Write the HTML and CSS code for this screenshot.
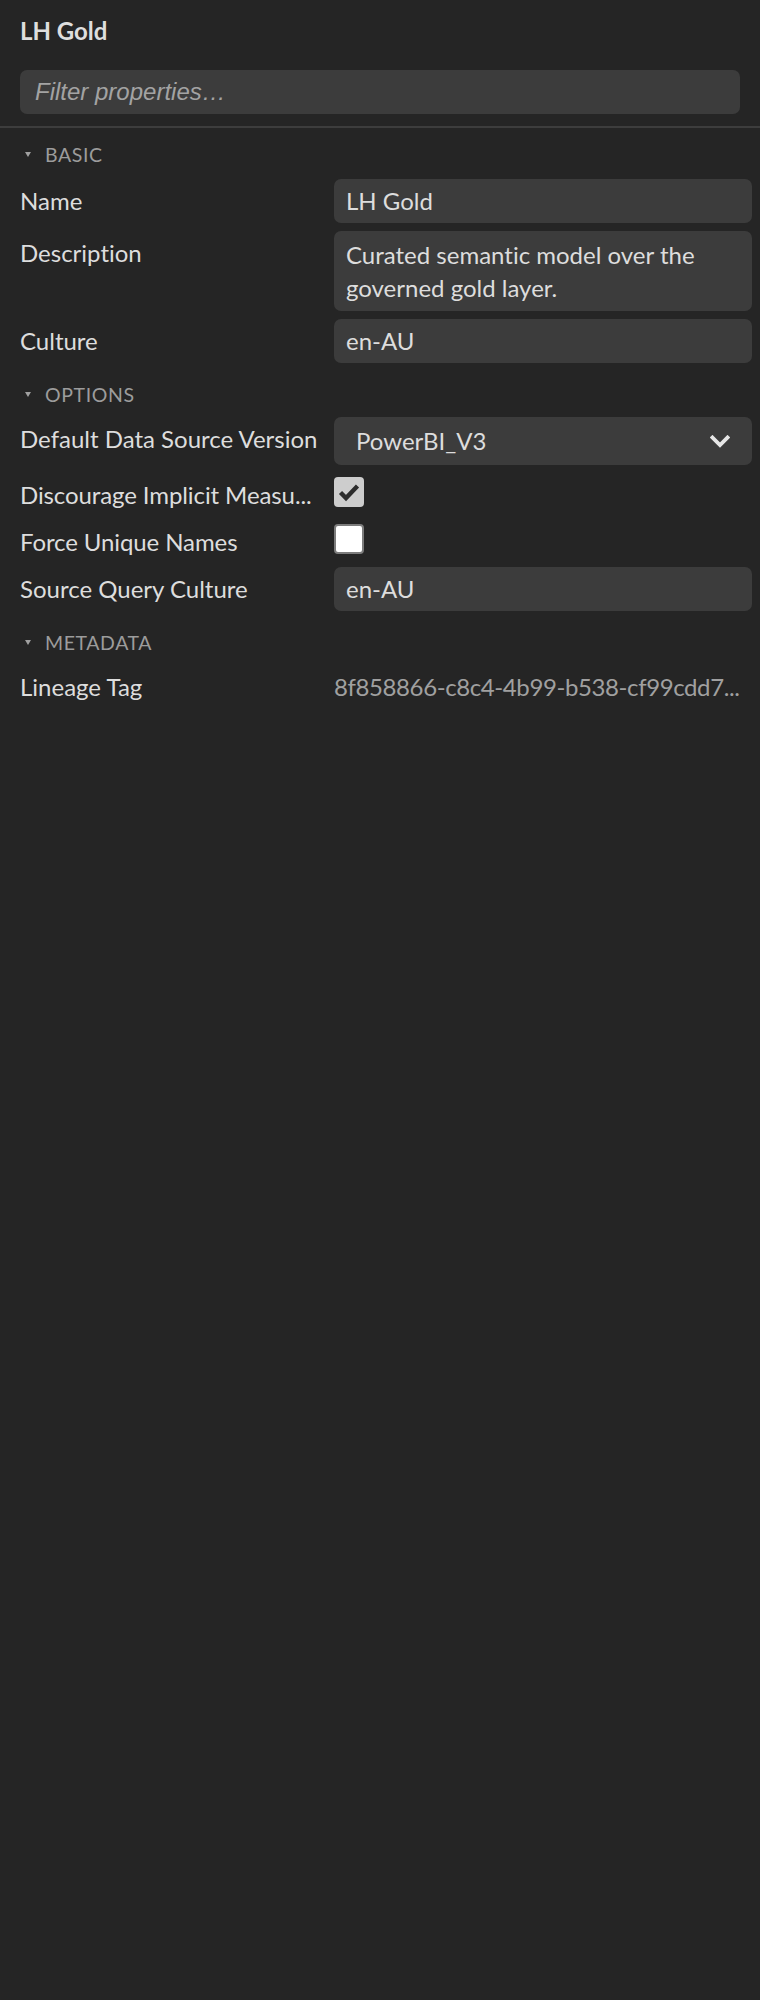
FILE: index.html
```html
<!DOCTYPE html>
<html lang="en">
<head>
<meta charset="utf-8">
<title>LH Gold — Properties</title>
<link rel="stylesheet" href="styles.css">
</head>
<body>
<div class="panel">
  <header class="panel-head">
    <h1 class="title">LH Gold</h1>
    <div class="filter"><span class="placeholder">Filter properties…</span></div>
  </header>

  <div class="panel-body">
    <section class="section">
      <div class="section-head"><span class="caret"></span><span class="section-name">BASIC</span></div>
      <div class="grid">
        <div class="label">Name</div>
        <div class="field">LH Gold</div>
        <div class="label">Description</div>
        <div class="field multiline">Curated semantic model over the governed gold layer.</div>
        <div class="label">Culture</div>
        <div class="field">en-AU</div>
      </div>
    </section>

    <section class="section">
      <div class="section-head"><span class="caret"></span><span class="section-name">OPTIONS</span></div>
      <div class="grid">
        <div class="label">Default Data Source Version</div>
        <div class="field select">
          <span>PowerBI_V3</span>
          <svg class="chevron" width="20" height="13" viewBox="0 0 20 13"><polyline points="2.5,2.5 10,10 17.5,2.5" fill="none" stroke="#e6e6e6" stroke-width="3.8" stroke-linecap="square"/></svg>
        </div>
        <div class="label check-label">Discourage Implicit Measu...</div>
        <div class="check-cell"><span class="checkbox checked"><svg width="30" height="30" viewBox="0 0 30 30"><polyline points="6.5,15.5 12,21 23.5,9" fill="none" stroke="#2c2c2c" stroke-width="4.4"/></svg></span></div>
        <div class="label check-label">Force Unique Names</div>
        <div class="check-cell"><span class="checkbox"></span></div>
        <div class="label">Source Query Culture</div>
        <div class="field">en-AU</div>
      </div>
    </section>

    <section class="section">
      <div class="section-head"><span class="caret"></span><span class="section-name">METADATA</span></div>
      <div class="grid">
        <div class="label">Lineage Tag</div>
        <div class="readonly">8f858866-c8c4-4b99-b538-cf99cdd7...</div>
      </div>
    </section>
  </div>
</div>
</body>
</html>
```
FILE: styles.css
```css
html, body {
  margin: 0;
  padding: 0;
  background: #252525;
}

body {
  font-family: Lato, "Open Sans", "Noto Sans", sans-serif;
  font-variant-ligatures: none;
  color: #dddddd;
  width: 760px;
  min-height: 2000px;
}

.panel-head {
  padding: 15px 20px 12px;
  border-bottom: 2px solid #3d3d3d;
}

.title {
  margin: 0;
  font-size: 24px;
  line-height: 32px;
  font-weight: 700;
  color: #dedede;
}

.filter {
  margin-top: 23px;
  height: 44px;
  box-sizing: border-box;
  background: #3c3c3c;
  border-radius: 7px;
  padding: 0 15px;
  display: flex;
  align-items: center;
}

.placeholder {
  font-family: "Liberation Sans", Arial, sans-serif;
  font-style: italic;
  font-size: 24px;
  color: #a3a3a3;
}

.panel-body {
  padding-top: 15px;
}

.section + .section {
  margin-top: 18px;
}

.section-head {
  display: flex;
  align-items: center;
  height: 24px;
  padding-left: 25px;
  margin-bottom: 12px;
}

.section + .section .section-head {
  padding-top: 2px;
  margin-bottom: 10px;
}

.caret {
  width: 0;
  height: 0;
  border-left: 3.5px solid transparent;
  border-right: 3.5px solid transparent;
  border-top: 5px solid #a0a0a0;
  margin-right: 14px;
  margin-top: -1px;
}

.section-name {
  font-size: 19.5px;
  line-height: 24px;
  letter-spacing: 0.6px;
  color: #9c9c9c;
}

.grid {
  display: grid;
  grid-template-columns: 298px 1fr;
  column-gap: 16px;
  row-gap: 8px;
  padding: 0 8px 0 20px;
}

.label {
  font-size: 24px;
  line-height: 30px;
  padding-top: 7px;
  white-space: nowrap;
  color: #dddddd;
}

.field {
  background: #3c3c3c;
  border-radius: 7px;
  padding: 7px 12px;
  font-size: 24px;
  line-height: 30px;
  color: #dddddd;
  min-width: 0;
}

.field.multiline {
  line-height: 33px;
}

.field.select {
  padding: 9px 23px 9px 22px;
  display: flex;
  align-items: center;
  justify-content: space-between;
}

.chevron {
  display: block;
  margin-right: -1px;
}

.check-label {
  padding-top: 7px;
  padding-bottom: 2px;
  letter-spacing: -0.1px;
}

.check-cell {
  padding: 4px 0 5px;
  display: flex;
}

.checkbox {
  width: 30px;
  height: 30px;
  box-sizing: border-box;
  border-radius: 4px;
  background: #ffffff;
  border: 2px solid #7c7c7c;
  display: block;
}

.checkbox.checked {
  background: #cdcdcd;
  border: none;
}

.checkbox svg {
  display: block;
}

.readonly {
  font-size: 24px;
  line-height: 30px;
  padding-top: 7px;
  letter-spacing: -0.4px;
  color: #a0a0a0;
  white-space: nowrap;
  min-width: 0;
}
```
